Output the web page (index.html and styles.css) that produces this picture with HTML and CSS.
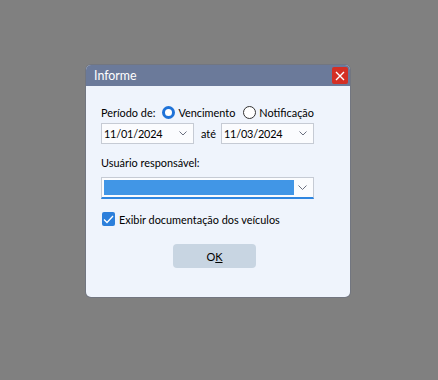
FILE: index.html
```html
<!DOCTYPE html>
<html lang="pt-BR">
<head>
    <meta charset="UTF-8">
    <title>Informe</title>
    <link rel="stylesheet" href="styles.css">
</head>
<body>
    <div class="dialog">
        <div class="title-bar">
            <span class="title">Informe</span>
            <span class="close-btn">
                <svg width="10" height="10" viewBox="0 0 10 10"><path d="M1 1L9 9M9 1L1 9" stroke="#fff" stroke-width="1.4"/></svg>
            </span>
        </div>
        <div class="content">
            <div class="row period">
                <span class="label">Período de:</span>
                <span class="radio checked"></span><span class="radio-text">Vencimento</span>
                <span class="radio"></span><span class="radio-text">Notificação</span>
            </div>
            <div class="row dates">
                <div class="combo date">
                    <span class="value">11/01/2024</span>
                    <svg class="chev" width="8" height="5" viewBox="0 0 8 5"><path d="M0.5 0.5L4 4L7.5 0.5" fill="none" stroke="#6b7080"/></svg>
                </div>
                <span class="ate">até</span>
                <div class="combo date">
                    <span class="value">11/03/2024</span>
                    <svg class="chev" width="8" height="5" viewBox="0 0 8 5"><path d="M0.5 0.5L4 4L7.5 0.5" fill="none" stroke="#6b7080"/></svg>
                </div>
            </div>
            <div class="user-label">Usuário responsável:</div>
            <div class="combo user">
                <span class="selection"></span>
                <svg class="chev" width="9" height="5" viewBox="0 0 9 5"><path d="M0.5 0.5L4.5 4.5L8.5 0.5" fill="none" stroke="#6b7080"/></svg>
            </div>
            <div class="row check-row">
                <span class="checkbox">
                    <svg width="11" height="9" viewBox="0 0 11 9"><path d="M1 4.5L4 7.5L10 1" fill="none" stroke="#fff" stroke-width="1.3"/></svg>
                </span>
                <span>Exibir documentação dos veículos</span>
            </div>
            <div class="actions">
                <button class="ok-btn">O<u>K</u></button>
            </div>
        </div>
    </div>
</body>
</html>
```

FILE: styles.css
```css
body {
    margin: 0;
    height: 380px;
    background: #808080;
    font-family: Lato, "Noto Sans", sans-serif;
    font-size: 10.9px;
    color: #000;
    padding: 65px 0 0 86px;
    box-sizing: border-box;
}
.dialog {
    width: 264px;
    height: 232px;
    background: #eff4fc;
    border-radius: 5px;
    overflow: hidden;
    box-shadow: 0 0 0 1px rgba(90, 100, 130, 0.35);
}
.title-bar {
    height: 21px;
    background: #6b7a9a;
    display: flex;
    align-items: center;
    justify-content: space-between;
    padding: 0 2px 0 8px;
}
.title {
    color: #fff;
    font-size: 12.4px;
}
.close-btn {
    width: 16px;
    height: 17px;
    background: #d42f24;
    border-radius: 2px;
    display: flex;
    align-items: center;
    justify-content: center;
}
.content {
    padding: 17px 0 0 15px;
}
.row {
    display: flex;
    align-items: center;
}
.period {
    height: 18px;
}
.label {
    margin-right: 7px;
}
.radio {
    width: 13px;
    height: 13px;
    box-sizing: border-box;
    border: 1px solid #333;
    border-radius: 50%;
    background: #fff;
    margin-right: 3px;
}
.radio.checked {
    border: 3.5px solid #1f73d8;
}
.radio-text {
    margin-right: 8px;
}
.dates {
    margin-top: 2px;
}
.combo {
    height: 21px;
    box-sizing: border-box;
    border: 1px solid #c6cbd4;
    background: #fbfcfe;
    display: flex;
    align-items: center;
    justify-content: space-between;
    padding: 0 6px 0 2px;
}
.date {
    width: 93px;
}
.date .value {
    letter-spacing: -0.2px;
}
.ate {
    margin: 0 5px 0 7px;
}
.user-label {
    margin-top: 11px;
    height: 16px;
    line-height: 16px;
}
.user {
    width: 213px;
    height: 22px;
    margin-top: 6px;
    border-bottom: 2px solid #2f86e0;
    padding-left: 2px;
}
.selection {
    width: 190px;
    height: 15px;
    background: #4196e6;
}
.check-row {
    margin-top: 12px;
    height: 16px;
}
.checkbox {
    width: 13px;
    height: 14px;
    margin: 0 4px 0 1px;
    background: #2c7fdb;
    border-radius: 2px;
    display: flex;
    align-items: center;
    justify-content: center;
}
.actions {
    margin: 17px 0 0 72px;
}
.ok-btn {
    width: 83px;
    height: 24px;
    border: none;
    border-radius: 4px;
    background: #c8d5e2;
    font-family: inherit;
    font-size: 11px;
    color: #000;
    padding: 0;
}
```
